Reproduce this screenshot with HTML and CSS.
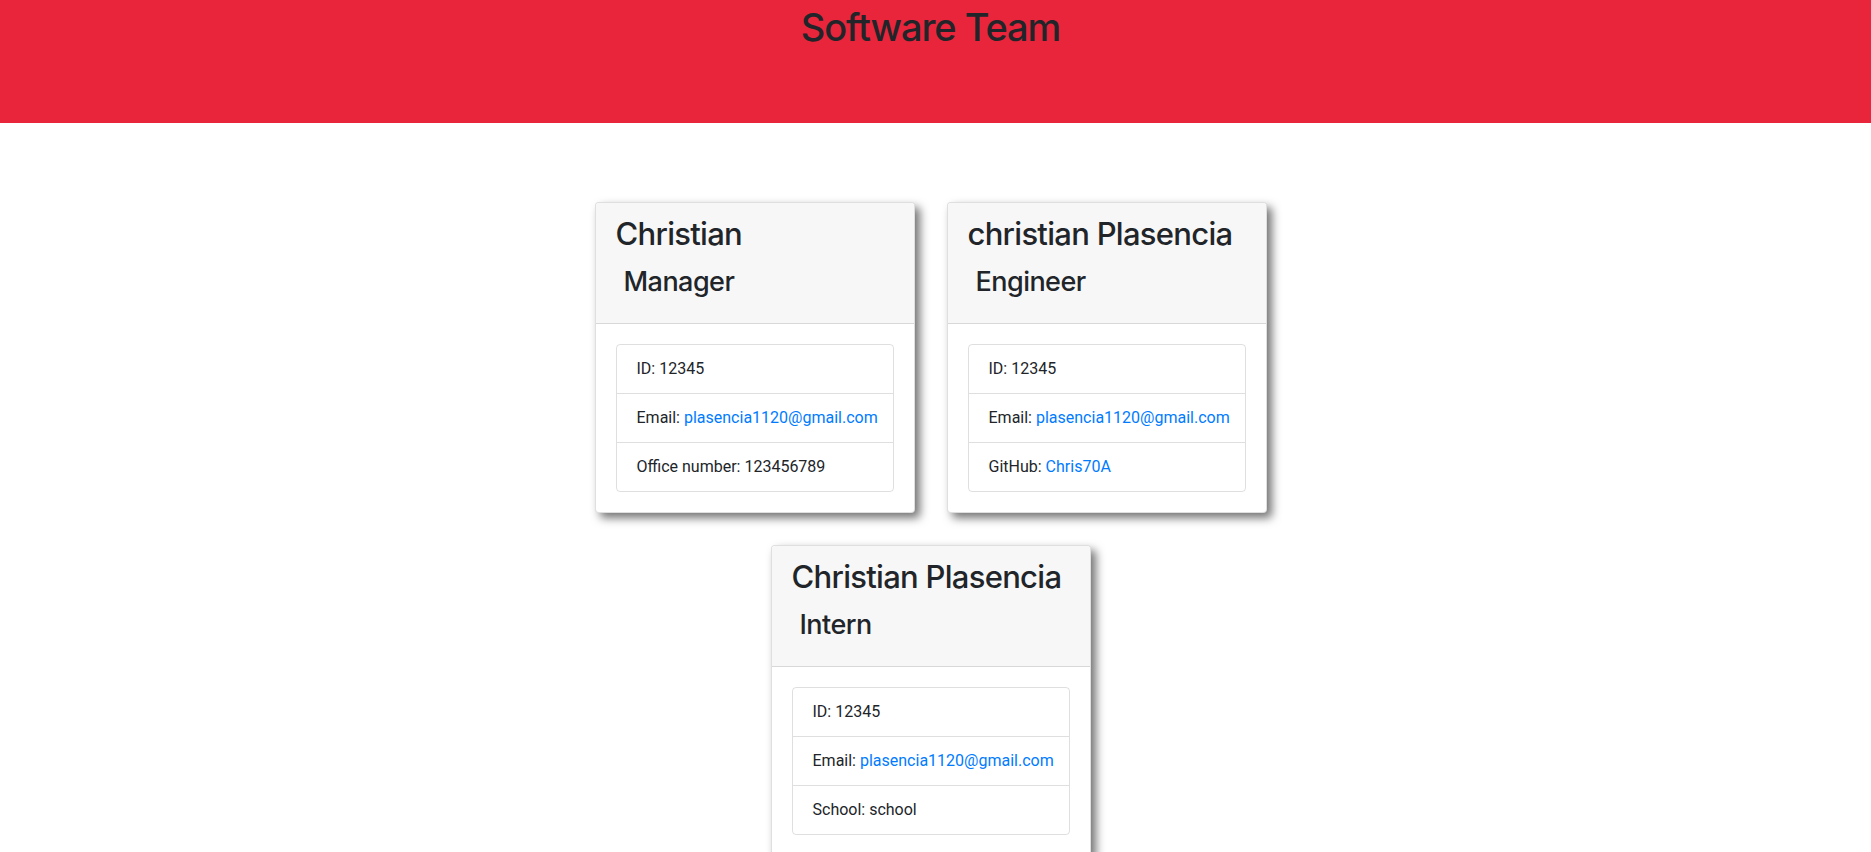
FILE: index.html
```html
<!DOCTYPE html>
<html lang="en">
<head>
<meta charset="UTF-8">
<title>Software Team</title>
<link rel="stylesheet" href="styles.css">
</head>
<body>
<header class="banner">
  <h1 class="banner-title">Software Team</h1>
</header>
<main class="team">
  <div class="team-grid">
    <section class="card">
      <div class="card-header">
        <h2 class="card-name">Christian</h2>
        <h3 class="card-role">Manager</h3>
      </div>
      <div class="card-body">
        <ul class="info-list">
          <li class="info-item">ID: 12345</li>
          <li class="info-item">Email: <a href="#" class="info-link">plasencia1120@gmail.com</a></li>
          <li class="info-item">Office number: 123456789</li>
        </ul>
      </div>
    </section>
    <section class="card">
      <div class="card-header">
        <h2 class="card-name">christian Plasencia</h2>
        <h3 class="card-role">Engineer</h3>
      </div>
      <div class="card-body">
        <ul class="info-list">
          <li class="info-item">ID: 12345</li>
          <li class="info-item">Email: <a href="#" class="info-link">plasencia1120@gmail.com</a></li>
          <li class="info-item">GitHub: <a href="#" class="info-link">Chris70A</a></li>
        </ul>
      </div>
    </section>
    <section class="card">
      <div class="card-header">
        <h2 class="card-name">Christian Plasencia</h2>
        <h3 class="card-role">Intern</h3>
      </div>
      <div class="card-body">
        <ul class="info-list">
          <li class="info-item">ID: 12345</li>
          <li class="info-item">Email: <a href="#" class="info-link">plasencia1120@gmail.com</a></li>
          <li class="info-item">School: school</li>
        </ul>
      </div>
    </section>
  </div>
</main>
</body>
</html>
```

FILE: styles.css
```css
* {
  box-sizing: border-box;
}

html {
  overflow: hidden;
}

body {
  margin: 0;
  font-family: Roboto, "Liberation Sans", sans-serif;
  font-size: 16px;
  line-height: 1.5;
  color: #212529;
  background: #fff;
}

.banner {
  height: 123px;
  background: #e9253c;
  padding: 3px 10px 0 0;
  text-align: center;
}

.banner-title {
  margin: 0;
  font-family: Inter, Roboto, sans-serif;
  font-size: 38px;
  font-weight: 500;
  line-height: 48px;
  letter-spacing: -0.028em;
}

.team {
  padding: 63px 10px 0 0;
}

.team-grid {
  display: flex;
  flex-wrap: wrap;
  justify-content: center;
  max-width: 720px;
  margin: 0 auto;
}

.card {
  width: 320px;
  margin: 16px;
  background: #fff;
  border: 1px solid rgba(0, 0, 0, 0.125);
  border-radius: 4px;
  box-shadow: 5px 5px 10px rgba(0, 0, 0, 0.55);
  overflow: hidden;
}

.card-header {
  background: #f7f7f7;
  padding: 12px 20px;
  border-bottom: 1px solid rgba(0, 0, 0, 0.125);
}

.card-name {
  margin: 0 0 12px;
  font-family: Inter, Roboto, sans-serif;
  font-size: 31px;
  font-weight: 500;
  line-height: 38.4px;
  letter-spacing: -0.023em;
  white-space: nowrap;
}

.card-role {
  margin: 0 0 12px;
  padding-left: 8px;
  font-family: Inter, Roboto, sans-serif;
  font-size: 27px;
  font-weight: 500;
  line-height: 33.6px;
  letter-spacing: -0.02em;
}

.card-body {
  padding: 20px;
}

.info-list {
  list-style: none;
  margin: 0;
  padding: 0;
  border: 1px solid rgba(0, 0, 0, 0.125);
  border-radius: 4px;
}

.info-item {
  padding: 12px 20px;
  line-height: 24px;
  white-space: nowrap;
}

.info-item + .info-item {
  border-top: 1px solid rgba(0, 0, 0, 0.125);
}

.info-link {
  color: #007bff;
  text-decoration: none;
}
```
